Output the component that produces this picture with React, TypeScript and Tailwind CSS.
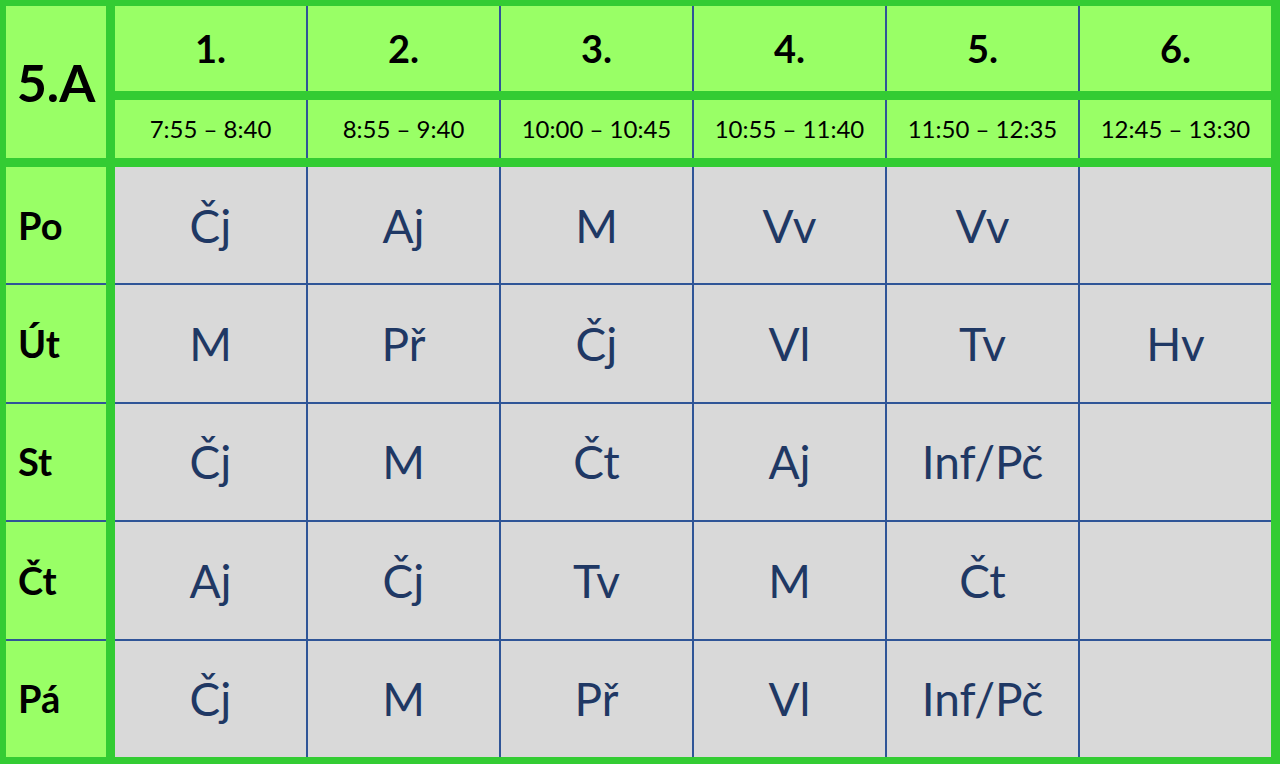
const periods = [
  { n: "1.", t: "7:55 – 8:40" },
  { n: "2.", t: "8:55 – 9:40" },
  { n: "3.", t: "10:00 – 10:45" },
  { n: "4.", t: "10:55 – 11:40" },
  { n: "5.", t: "11:50 – 12:35" },
  { n: "6.", t: "12:45 – 13:30" },
];

const days = [
  { d: "Po", s: ["Čj", "Aj", "M", "Vv", "Vv", ""] },
  { d: "Út", s: ["M", "Př", "Čj", "Vl", "Tv", "Hv"] },
  { d: "St", s: ["Čj", "M", "Čt", "Aj", "Inf/Pč", ""] },
  { d: "Čt", s: ["Aj", "Čj", "Tv", "M", "Čt", ""] },
  { d: "Pá", s: ["Čj", "M", "Př", "Vl", "Inf/Pč", ""] },
];

export default function App() {
  return (
    <div
      className="w-[1280px] h-[764px] bg-[#33cc33] pt-[6px] pl-[6px] pr-[9px] pb-[7px] flex gap-[9px]"
      style={{ fontFamily: "Lato, 'Open Sans', sans-serif" }}
    >
      {/* left column */}
      <div className="w-[100px] flex flex-col gap-[9px]">
        <div className="h-[152px] bg-[#99ff66] flex items-center justify-center text-[52px] font-bold text-black">
          5.A
        </div>
        <div className="flex-1 grid grid-rows-5 gap-[2px] bg-[#2f5597]">
          {days.map((row) => (
            <div
              key={row.d}
              className="bg-[#99ff66] flex items-center pl-[12px] text-[38px] font-bold text-black"
            >
              {row.d}
            </div>
          ))}
        </div>
      </div>

      {/* timetable */}
      <div className="flex-1 flex flex-col gap-[9px]">
        <div className="h-[85px] grid grid-cols-6 gap-[2px] bg-[#2f5597]">
          {periods.map((p) => (
            <div
              key={p.n}
              className="bg-[#99ff66] flex items-center justify-center text-[38px] font-bold text-black"
            >
              {p.n}
            </div>
          ))}
        </div>
        <div className="h-[58px] grid grid-cols-6 gap-[2px] bg-[#2f5597]">
          {periods.map((p) => (
            <div
              key={p.t}
              className="bg-[#99ff66] flex items-center justify-center text-[24px] text-black"
            >
              {p.t}
            </div>
          ))}
        </div>
        <div className="flex-1 grid grid-cols-6 grid-rows-5 gap-[2px] bg-[#2f5597]">
          {days.map((row) =>
            row.s.map((s, i) => (
              <div
                key={row.d + i}
                className="bg-[#d9d9d9] flex items-center justify-center text-[46px] text-[#1f3864]"
              >
                {s}
              </div>
            ))
          )}
        </div>
      </div>
    </div>
  );
}
